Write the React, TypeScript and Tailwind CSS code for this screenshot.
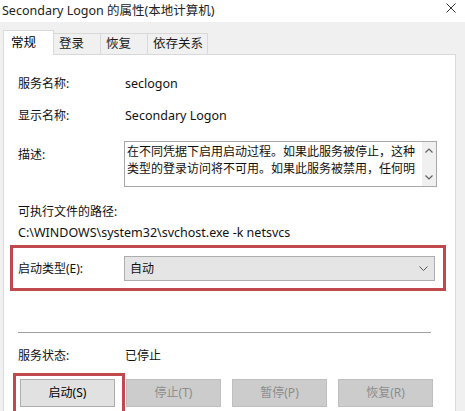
import React from "react";

const font = { fontFamily: '"Noto Sans", "Noto Sans CJK SC", sans-serif' };

function Tab({ label, active, width }: { label: string; active?: boolean; width: string }) {
  if (active) {
    return (
      <div
        className={`${width} h-[25px] -mb-px relative z-10 bg-white border border-b-0 border-[#d9d9d9] flex items-center pl-[7px] text-[12.5px] text-black`}
      >
        {label}
      </div>
    );
  }
  return (
    <div
      className={`${width} h-[21px] bg-[#f0f0f0] border border-l-0 border-b-0 border-[#d9d9d9] flex items-center pl-[5px] text-[12.5px] text-[#1a1a1a]`}
    >
      {label}
    </div>
  );
}

function Button({ label, disabled }: { label: string; disabled?: boolean }) {
  return (
    <div
      className={
        disabled
          ? "w-[95px] h-[28px] bg-[#cccccc] border border-[#bfbfbf] flex items-center justify-center text-[12px] text-[#8c8c8c]"
          : "w-[95px] h-[28px] bg-[#e1e1e1] border border-[#adadad] flex items-center justify-center text-[12px] text-black"
      }
    >
      {label}
    </div>
  );
}

export default function App() {
  return (
    <div className="w-[465px] h-[411px] overflow-hidden bg-white flex flex-col" style={font}>
      {/* Title bar */}
      <div className="h-[22px] shrink-0 flex items-center justify-between pl-[2px] pr-[9px]">
        <span className="text-[12.5px] leading-none text-[#222]">Secondary Logon 的属性(本地计算机)</span>
        <svg width="10" height="10" viewBox="0 0 10 10" className="-mt-[6px]">
          <path d="M0.5 0.5 L9.5 9.5 M9.5 0.5 L0.5 9.5" stroke="#333" strokeWidth="1" />
        </svg>
      </div>

      {/* Dialog body */}
      <div className="flex-1 bg-[#f0f0f0] pl-[3px] pr-[9px] flex flex-col">
        <div className="h-[32px] shrink-0 flex items-end">
          <Tab label="常规" active width="w-[51px]" />
          <Tab label="登录" width="w-[47px]" />
          <Tab label="恢复" width="w-[47px]" />
          <Tab label="依存关系" width="w-[60px]" />
        </div>

        <div className="flex-1 bg-white border border-b-0 border-[#d9d9d9] flex flex-col text-[12px] text-[#111] leading-[16px]">
          <div className="mt-[21px] pl-[14px] flex">
            <span className="w-[107px]">服务名称:</span>
            <span className="text-[12.5px]">seclogon</span>
          </div>
          <div className="mt-[16px] pl-[14px] flex">
            <span className="w-[107px]">显示名称:</span>
            <span className="text-[12.5px]">Secondary Logon</span>
          </div>
          <div className="mt-[17px] pl-[14px] flex">
            <span className="w-[106px] pt-[6px]">描述:</span>
            <div className="w-[313px] h-[46px] border border-[#a8a8a8] flex">
              <div className="flex-1 pl-[2px] pt-[1px] leading-[17px] overflow-hidden">
                <div className="whitespace-nowrap">在不同凭据下启用启动过程。如果此服务被停止，这种</div>
                <div className="whitespace-nowrap">类型的登录访问将不可用。如果此服务被禁用，任何明</div>
              </div>
              <div className="w-[14px] bg-[#f0f0f0] flex flex-col items-center justify-between py-[6px]">
                <svg width="8" height="5" viewBox="0 0 8 5">
                  <path d="M0.5 4.5 L4 1 L7.5 4.5" fill="none" stroke="#606060" strokeWidth="1.2" />
                </svg>
                <svg width="8" height="5" viewBox="0 0 8 5">
                  <path d="M0.5 0.5 L4 4 L7.5 0.5" fill="none" stroke="#606060" strokeWidth="1.2" />
                </svg>
              </div>
            </div>
          </div>
          <div className="mt-[17px] pl-[14px]">可执行文件的路径:</div>
          <div className="mt-[5px] pl-[14px] text-[12.5px]">C:\WINDOWS\system32\svchost.exe -k netsvcs</div>

          {/* Startup type (highlighted) */}
          <div className="mt-[4px] ml-[6px] w-[436px] border-[3px] border-[#c0494d] pl-[5px] pr-[8px] pt-[8px] pb-[7px] flex items-center">
            <span className="w-[106px]">启动类型(E):</span>
            <div className="flex-1 h-[25px] bg-[#e5e5e5] border border-[#adadad] flex items-center justify-between pl-[5px] pr-[6px]">
              <span>自动</span>
              <svg width="9" height="5" viewBox="0 0 9 5">
                <path d="M0.5 0.5 L4.5 4.5 L8.5 0.5" fill="none" stroke="#555" strokeWidth="1" />
              </svg>
            </div>
          </div>

          <div className="mt-[41px] ml-[14px] w-[413px] h-px bg-[#a0a0a0]" />

          <div className="mt-[15px] pl-[14px] flex">
            <span className="w-[107px]">服务状态:</span>
            <span>已停止</span>
          </div>

          <div className="mt-[9px] flex items-start">
            <div className="ml-[9px] border-[3px] border-[#c0494d] pt-[3px] pl-[4px] pr-[7px] pb-[6px]">
              <Button label="启动(S)" />
            </div>
            <div className="mt-[6px] ml-px flex gap-[11px]">
              <Button label="停止(T)" disabled />
              <Button label="暂停(P)" disabled />
              <Button label="恢复(R)" disabled />
            </div>
          </div>
        </div>
      </div>
    </div>
  );
}
